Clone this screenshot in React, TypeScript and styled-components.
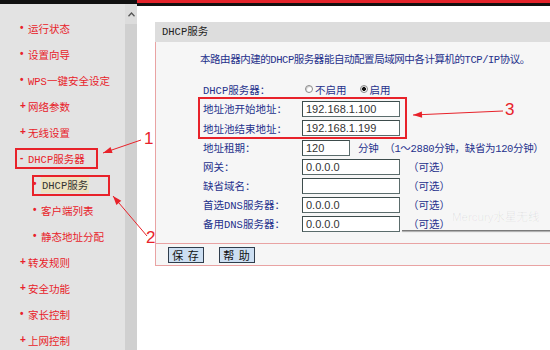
import React from "react";
import styled, { createGlobalStyle } from "styled-components";

const RED = "#e8222a";
const NAVY = "#25318c";
const PINK = "#e9a3a3";
const FONT = `"Liberation Mono", "Noto Sans CJK SC", monospace`;

const GlobalStyle = createGlobalStyle`
  html, body { margin: 0; padding: 0; background: #fff; }
  body { width: 550px; height: 350px; overflow: hidden; font-family: ${FONT}; }
  #root { width: 550px; height: 350px; overflow: hidden; }
`;

const Page = styled.div`
  position: relative;
  display: flex;
  width: 550px;
  height: 350px;
  overflow: hidden;
  font-family: ${FONT};
  font-size: 10.5px;
`;

/* ---------- left frame ---------- */
const LeftFrame = styled.div`
  display: flex;
  flex-direction: column;
  width: 137px;
  flex-shrink: 0;
  border-top: 4px solid #111;
`;

const LeftInner = styled.div`
  display: flex;
  flex: 1;
  min-height: 0;
`;

const Sidebar = styled.nav`
  width: 125px;
  background: #e3e3e3;
  padding-top: 11px;
  box-sizing: border-box;
  overflow: hidden;
`;

const MenuItem = styled.div<{ $sub?: boolean }>`
  display: flex;
  align-items: center;
  height: 26px;
  padding-left: ${(p) => (p.$sub ? 33 : 20)}px;
  color: ${RED};
  white-space: nowrap;
`;

const Marker = styled.span`
  display: inline-block;
  width: 8px;
  font-family: "Liberation Sans", sans-serif;
  font-size: 10px;
  font-weight: bold;
  line-height: 1;
`;

const Active = styled.span`
  background: #ede3c1;
  color: #333;
  padding: 1px 1px;
`;

const Scrollbar = styled.div`
  width: 12px;
  background: #d0d0d0;
  display: flex;
  flex-direction: column;
`;

const ScrollUp = styled.div`
  height: 20px;
  background: #dcdcdc;
  display: flex;
  align-items: center;
  justify-content: center;
`;

/* ---------- main frame ---------- */
const MainFrame = styled.div`
  flex: 1;
  display: flex;
  flex-direction: column;
  min-width: 0;
  overflow: hidden;
  border-top: 3px solid #e3232b;
`;

const MainContent = styled.div`
  flex: 1;
  border-top: 3px solid #111;
  background: #fff;
  padding: 16px 0 0 18px;
`;

const Panel = styled.section`
  width: 430px;
`;

const PanelHeader = styled.div`
  height: 20px;
  line-height: 20px;
  background: #dddddd;
  padding-left: 7px;
  color: #222;
`;

const PanelBody = styled.div`
  background: #f6f6f6;
  border-left: 1px solid ${PINK};
  border-bottom: 1px solid ${PINK};
`;

const Intro = styled.p`
  margin: 0;
  padding: 10px 0 0 44px;
  line-height: 16px;
  color: ${NAVY};
  white-space: nowrap;
  letter-spacing: -0.45px;
`;

const Form = styled.div`
  display: flex;
  flex-direction: column;
  padding: 11px 0 10px 47px;
`;

const Row = styled.div<{ $h?: number }>`
  display: flex;
  align-items: center;
  height: ${(p) => p.$h ?? 19}px;
  color: ${NAVY};
  white-space: nowrap;
`;

const Label = styled.span`
  width: 99px;
  flex-shrink: 0;
`;

const RadioOption = styled.label`
  display: flex;
  align-items: center;
  margin-left: 3px;
  margin-right: 10px;
  gap: 2px;
`;

const RadioDot = styled.span<{ $checked?: boolean }>`
  width: 8px;
  height: 8px;
  border-radius: 50%;
  box-sizing: border-box;
  border: 1px solid #8a8a8a;
  background: ${(p) =>
    p.$checked ? "radial-gradient(circle, #111 0 1.8px, #fff 2.2px)" : "#fff"};
  box-shadow: inset 1px 1px 1px rgba(0, 0, 0, 0.2);
`;

const Field = styled.input<{ $w?: number }>`
  width: ${(p) => p.$w ?? 98}px;
  height: 16px;
  box-sizing: border-box;
  margin: 0;
  padding: 0 0 0 3px;
  border: 1px solid #5b6c6c;
  border-top-color: #3d4c4c;
  border-left-color: #3d4c4c;
  background: #fff;
  font-family: "Liberation Sans", Arial, sans-serif;
  font-size: 11px;
  color: #333;
  outline: none;
`;

const Hint = styled.span<{ $gap?: number; $tight?: boolean }>`
  margin-left: ${(p) => p.$gap ?? 8}px;
  letter-spacing: ${(p) => (p.$tight ? "-0.35px" : "0")};
`;

const Footer = styled.div`
  display: flex;
  gap: 15px;
  height: 22px;
  box-sizing: border-box;
  padding: 3px 0 0 12px;
  border-top: 1px solid ${PINK};
`;

const Button = styled.button`
  width: 36px;
  height: 16px;
  padding: 0;
  border: 1px solid #2f3d4c;
  background: #cddff2;
  font-family: "Noto Sans CJK SC", sans-serif;
  font-size: 11px;
  line-height: 14px;
  color: #111;
  letter-spacing: 1px;
`;

/* ---------- overlays (annotations) ---------- */
const MarkBox = styled.div<{ $x: number; $y: number; $w: number; $h: number }>`
  position: absolute;
  left: ${(p) => p.$x}px;
  top: ${(p) => p.$y}px;
  width: ${(p) => p.$w}px;
  height: ${(p) => p.$h}px;
  box-sizing: border-box;
  border: 2px solid ${RED};
  pointer-events: none;
`;

const Num = styled.span<{ $x: number; $y: number }>`
  position: absolute;
  left: ${(p) => p.$x}px;
  top: ${(p) => p.$y}px;
  font-family: "Liberation Sans", sans-serif;
  font-size: 17px;
  line-height: 1;
  color: ${RED};
  font-weight: 300;
`;

const Overlay = styled.svg`
  position: absolute;
  left: 0;
  top: 0;
  pointer-events: none;
`;

const Watermark = styled.span`
  position: absolute;
  left: 452px;
  top: 210px;
  font-family: "Liberation Sans", "Noto Sans CJK SC", sans-serif;
  font-size: 11.5px;
  line-height: 14px;
  color: rgba(0, 0, 0, 0.07);
  white-space: nowrap;
`;

const ShadowLine = styled.div`
  position: absolute;
  left: 402px;
  top: 230px;
  width: 150px;
  height: 1px;
  background: #7a7a7a;
  box-shadow: 0 1px 1px rgba(0, 0, 0, 0.35);
`;

type Arrow = { x1: number; y1: number; x2: number; y2: number };

function head({ x1, y1, x2, y2 }: Arrow) {
  const dx = x2 - x1;
  const dy = y2 - y1;
  const len = Math.hypot(dx, dy);
  const ux = dx / len;
  const uy = dy / len;
  const L = 9;
  const W = 3.2;
  const bx = x2 - ux * L;
  const by = y2 - uy * L;
  return `${x2},${y2} ${bx - uy * W},${by + ux * W} ${bx + uy * W},${by - ux * W}`;
}

const arrows: Arrow[] = [
  { x1: 141, y1: 140, x2: 103, y2: 153 },
  { x1: 147, y1: 236, x2: 113, y2: 196 },
  { x1: 503, y1: 111, x2: 413, y2: 115 },
];

type Item = { mark: string; text: string; sub?: boolean; active?: boolean };

const menu: Item[] = [
  { mark: "•", text: "运行状态" },
  { mark: "•", text: "设置向导" },
  { mark: "•", text: "WPS一键安全设定" },
  { mark: "+", text: "网络参数" },
  { mark: "+", text: "无线设置" },
  { mark: "-", text: "DHCP服务器" },
  { mark: "•", text: "DHCP服务", sub: true, active: true },
  { mark: "•", text: "客户端列表", sub: true },
  { mark: "•", text: "静态地址分配", sub: true },
  { mark: "+", text: "转发规则" },
  { mark: "+", text: "安全功能" },
  { mark: "•", text: "家长控制" },
  { mark: "+", text: "上网控制" },
];

type FieldRow = {
  label: string;
  value: string;
  h: number;
  w?: number;
  hint?: string;
  hintGap?: number;
  tight?: boolean;
};

const rows: FieldRow[] = [
  { label: "地址池开始地址：", value: "192.168.1.100", h: 19 },
  { label: "地址池结束地址：", value: "192.168.1.199", h: 20 },
  {
    label: "地址租期：",
    value: "120",
    h: 19,
    w: 48,
    hint: "分钟 （1～2880分钟，缺省为120分钟）",
    hintGap: 8,
    tight: true,
  },
  { label: "网关：", value: "0.0.0.0", h: 19, hint: "（可选）" },
  { label: "缺省域名：", value: "", h: 19, hint: "（可选）" },
  { label: "首选DNS服务器：", value: "0.0.0.0", h: 19, hint: "（可选）" },
  { label: "备用DNS服务器：", value: "0.0.0.0", h: 19, hint: "（可选）" },
];

export default function App() {
  return (
    <>
      <GlobalStyle />
      <Page>
        <LeftFrame>
          <LeftInner>
            <Sidebar>
              {menu.map((m) => (
                <MenuItem key={m.text + (m.sub ? "s" : "")} $sub={m.sub}>
                  <Marker>{m.mark}</Marker>
                  {m.active ? <Active>{m.text}</Active> : <span>{m.text}</span>}
                </MenuItem>
              ))}
            </Sidebar>
            <Scrollbar>
              <ScrollUp>
                <svg width="7" height="5" viewBox="0 0 7 5">
                  <path d="M0.5 4.2 L3.5 1 L6.5 4.2" fill="none" stroke="#555" strokeWidth="1.3" />
                </svg>
              </ScrollUp>
            </Scrollbar>
          </LeftInner>
        </LeftFrame>

        <MainFrame>
          <MainContent>
            <Panel>
              <PanelHeader>DHCP服务</PanelHeader>
              <PanelBody>
                <Intro>本路由器内建的DHCP服务器能自动配置局域网中各计算机的TCP/IP协议。</Intro>
                <Form>
                  <Row $h={20}>
                    <Label>DHCP服务器：</Label>
                    <RadioOption>
                      <RadioDot />
                      不启用
                    </RadioOption>
                    <RadioOption>
                      <RadioDot $checked />
                      启用
                    </RadioOption>
                  </Row>
                  {rows.map((r) => (
                    <Row key={r.label} $h={r.h}>
                      <Label>{r.label}</Label>
                      <Field $w={r.w} readOnly defaultValue={r.value} />
                      {r.hint && (
                        <Hint $gap={r.hintGap} $tight={r.tight}>
                          {r.hint}
                        </Hint>
                      )}
                    </Row>
                  ))}
                </Form>
                <Footer>
                  <Button>保 存</Button>
                  <Button>帮 助</Button>
                </Footer>
              </PanelBody>
            </Panel>
          </MainContent>
        </MainFrame>

        <Watermark>Mercury水星无线</Watermark>
        <ShadowLine />

        <MarkBox $x={15} $y={148} $w={83} $h={21} />
        <MarkBox $x={32} $y={175} $w={78} $h={21} />
        <MarkBox $x={198} $y={97} $w={209} $h={42} />

        <Overlay width="550" height="350" viewBox="0 0 550 350">
          {arrows.map((a, i) => (
            <g key={i}>
              <line x1={a.x1} y1={a.y1} x2={a.x2} y2={a.y2} stroke={RED} strokeWidth="1" />
              <polygon points={head(a)} fill={RED} />
            </g>
          ))}
        </Overlay>
        <Num $x={144} $y={130}>1</Num>
        <Num $x={146} $y={229}>2</Num>
        <Num $x={505} $y={101}>3</Num>
      </Page>
    </>
  );
}
